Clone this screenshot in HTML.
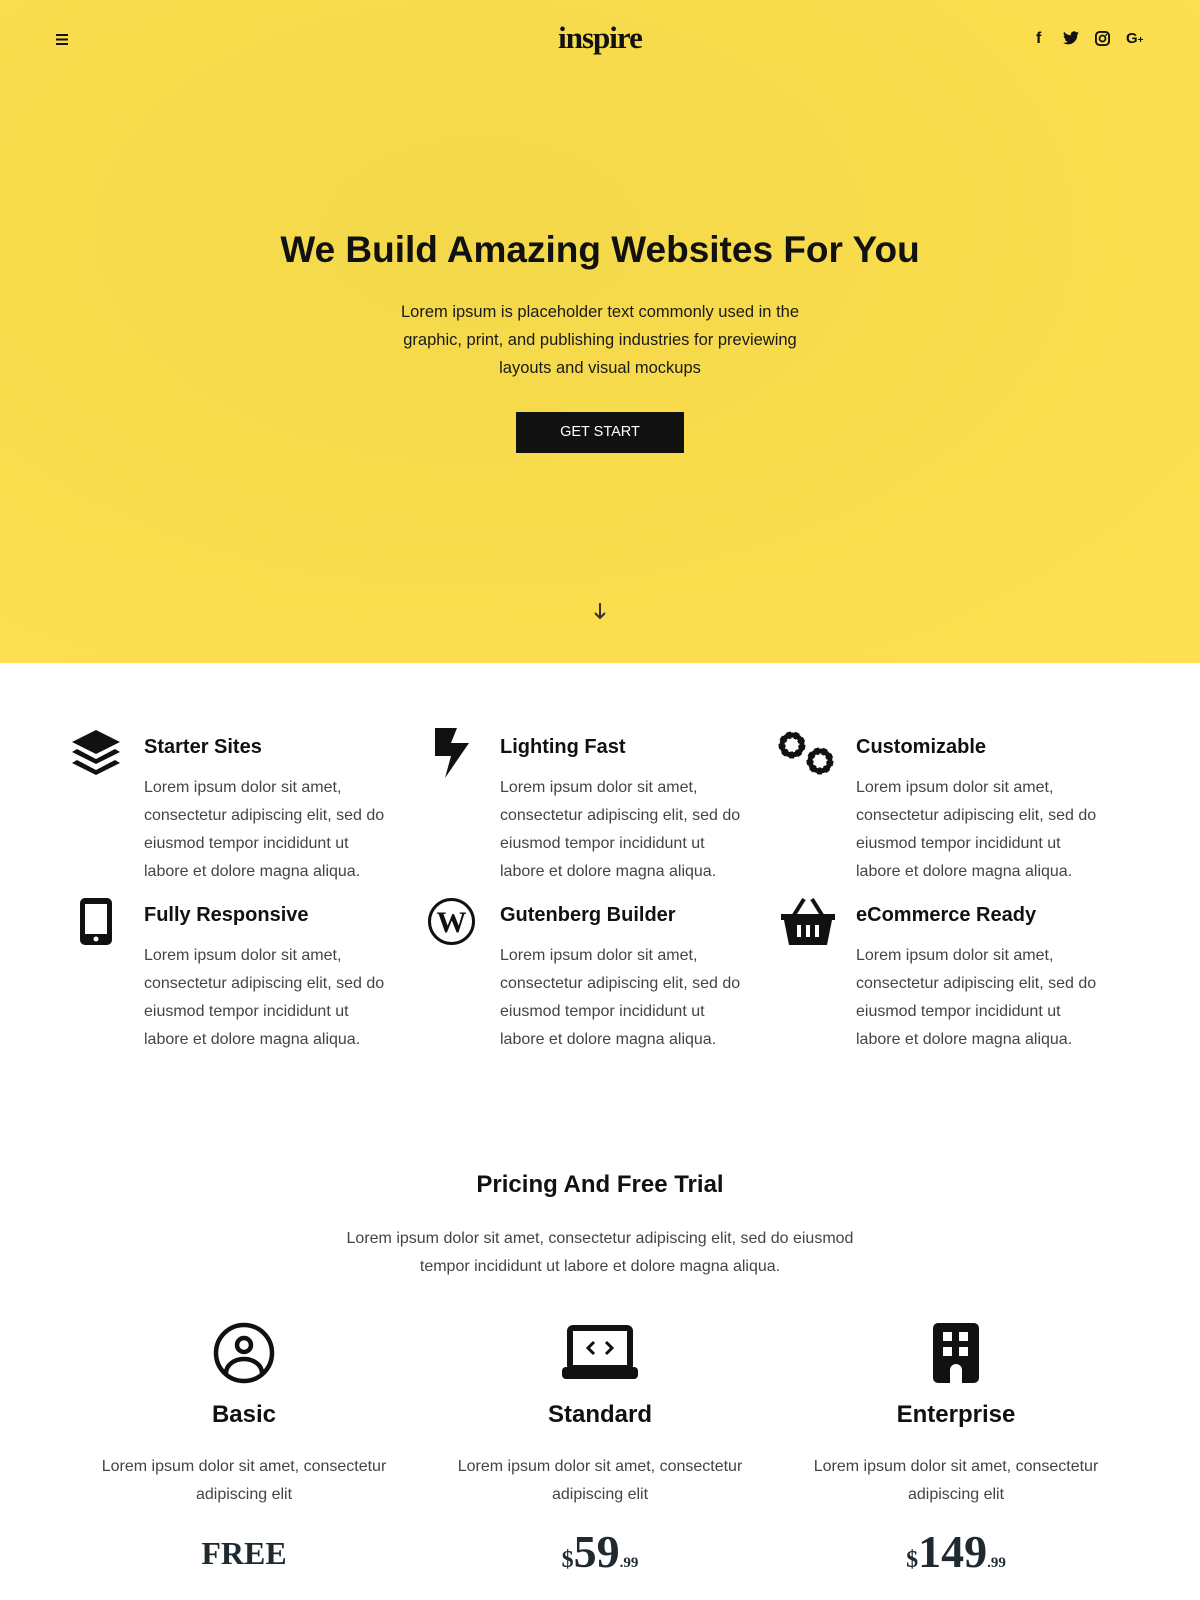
<!DOCTYPE html>
<html><head><meta charset="utf-8"><style>
*{margin:0;padding:0;box-sizing:border-box}
body{width:1200px;height:1600px;overflow:hidden;font-family:"Liberation Sans",sans-serif;background:#fff;color:#111;position:relative}
.hero{position:absolute;left:0;top:0;width:1200px;height:663px;background:radial-gradient(ellipse at 40% 35%,#f3d84a 0%,#f8dc4c 45%,#fcdf50 75%,#fde152 100%)}
.abs{position:absolute}
.logo{left:0;width:1200px;text-align:center;top:20px;font-family:"Liberation Serif",serif;font-weight:bold;font-size:31px;letter-spacing:-1px;color:#111}
h1{position:absolute;left:0;width:1200px;text-align:center;top:229px;font-size:37px;font-weight:bold;color:#111}
.hp{left:385px;width:430px;text-align:center;top:298px;font-size:16.5px;line-height:28px;color:#1a1a1a}
.btn{left:516px;top:412px;width:168px;height:41px;background:#111;color:#fff;font-size:14.5px;text-align:center;line-height:41px}
.ft{font-size:20px;font-weight:bold;color:#111}
.fp{font-size:16px;line-height:28px;color:#444;width:250px}
.pc{width:360px;text-align:center}
.pt{font-size:24px;font-weight:bold;color:#111}
.pp{font-size:16px;line-height:28px;color:#444;margin-top:24px}
.price{font-family:"Liberation Serif",serif;font-weight:bold;color:#1e2a30;margin-top:22px}
</style></head><body>
<div class="hero"></div>
<svg class="abs" style="left:56px;top:34px" width="14" height="12"><rect y="0" width="12" height="2" fill="#111"/><rect y="4.5" width="12" height="2" fill="#111"/><rect y="9" width="12" height="2" fill="#111"/></svg>
<div class="abs logo">inspire</div>
<div class="abs" style="left:1036px;top:30px;font-size:16px;font-weight:bold;color:#111">f</div>
<svg class="abs" style="left:1063px;top:31px" width="16" height="14" viewBox="0 0 24 20"><path d="M24 2.4a10 10 0 0 1-2.8.8A5 5 0 0 0 23.3.4a10 10 0 0 1-3.1 1.2A4.9 4.9 0 0 0 11.8 6 14 14 0 0 1 1.7.9a4.9 4.9 0 0 0 1.5 6.6A5 5 0 0 1 1 6.9a4.9 4.9 0 0 0 3.9 4.8 5 5 0 0 1-2.2.1 4.9 4.9 0 0 0 4.6 3.4A9.9 9.9 0 0 1 0 17.3 14 14 0 0 0 7.5 19.5c9 0 14-7.5 14-14v-.6A10 10 0 0 0 24 2.4z" fill="#111"/></svg>
<svg class="abs" style="left:1095px;top:31px" width="15" height="15" viewBox="0 0 16 16"><rect x="1" y="1" width="14" height="14" rx="4" fill="none" stroke="#111" stroke-width="2"/><circle cx="8" cy="8" r="3.2" fill="none" stroke="#111" stroke-width="1.8"/><circle cx="12" cy="4" r="1" fill="#111"/></svg>
<div class="abs" style="left:1126px;top:30px;font-size:15px;font-weight:bold;color:#111">G<span style="font-size:10px">+</span></div>
<h1>We Build Amazing Websites For You</h1>
<div class="abs hp">Lorem ipsum is placeholder text commonly used in the graphic, print, and publishing industries for previewing layouts and visual mockups</div>
<div class="abs btn">GET START</div>
<svg class="abs" style="left:594px;top:602px" width="12" height="18" viewBox="0 0 12 18"><path d="M6 1v15M1 11l5 5 5-5" stroke="#333" stroke-width="2" fill="none"/></svg>

<svg class="abs" style="left:71px;top:729px" width="50" height="49" viewBox="0 0 50 49"><path d="M25 1L49 13 25 25 1 13z" fill="#111"/><path d="M6 20l19 10 19-10 5 3-24 12L1 23z" fill="#111"/><path d="M6 31l19 10 19-10 5 3-24 12L1 34z" fill="#111"/></svg>
<svg class="abs" style="left:433px;top:728px" width="38" height="50" viewBox="0 0 38 50"><path d="M2 0h22l-6 15h18L12 50l6-22H2z" fill="#111"/></svg>
<svg class="abs" style="left:777px;top:730px" width="62" height="50" viewBox="0 0 62 50"><circle cx="15" cy="15" r="10" fill="none" stroke="#111" stroke-width="7" stroke-dasharray="4 3"/><circle cx="15" cy="15" r="10" fill="none" stroke="#111" stroke-width="5"/><circle cx="43" cy="31" r="10" fill="none" stroke="#111" stroke-width="7" stroke-dasharray="4 3"/><circle cx="43" cy="31" r="10" fill="none" stroke="#111" stroke-width="5"/></svg>
<svg class="abs" style="left:79px;top:897px" width="34" height="49" viewBox="0 0 34 49"><rect x="1" y="1" width="32" height="47" rx="5" fill="#111"/><rect x="6" y="7" width="22" height="30" fill="#fff"/><circle cx="17" cy="42" r="2.5" fill="#fff"/></svg>
<svg class="abs" style="left:427px;top:897px" width="49" height="49" viewBox="0 0 49 49"><circle cx="24.5" cy="24.5" r="22" fill="none" stroke="#111" stroke-width="3"/><text x="24.5" y="35" text-anchor="middle" font-family="Liberation Serif" font-size="30" font-weight="bold" fill="#111">W</text></svg>
<svg class="abs" style="left:780px;top:897px" width="56" height="49" viewBox="0 0 56 49"><path d="M14 18L24 2M42 18L32 2" stroke="#111" stroke-width="4"/><path d="M1 17h54v6h-3l-5 25H9L4 23H1z" fill="#111"/><rect x="17" y="28" width="4" height="12" fill="#fff"/><rect x="26" y="28" width="4" height="12" fill="#fff"/><rect x="35" y="28" width="4" height="12" fill="#fff"/></svg>

<div class="abs ft" style="left:144px;top:736px">Starter Sites</div>
<div class="abs ft" style="left:500px;top:736px">Lighting Fast</div>
<div class="abs ft" style="left:856px;top:736px">Customizable</div>
<div class="abs fp" style="left:144px;top:774px">Lorem ipsum dolor sit amet, consectetur adipiscing elit, sed do eiusmod tempor incididunt ut labore et dolore magna aliqua.</div>
<div class="abs fp" style="left:500px;top:774px">Lorem ipsum dolor sit amet, consectetur adipiscing elit, sed do eiusmod tempor incididunt ut labore et dolore magna aliqua.</div>
<div class="abs fp" style="left:856px;top:774px">Lorem ipsum dolor sit amet, consectetur adipiscing elit, sed do eiusmod tempor incididunt ut labore et dolore magna aliqua.</div>
<div class="abs ft" style="left:144px;top:904px">Fully Responsive</div>
<div class="abs ft" style="left:500px;top:904px">Gutenberg Builder</div>
<div class="abs ft" style="left:856px;top:904px">eCommerce Ready</div>
<div class="abs fp" style="left:144px;top:942px">Lorem ipsum dolor sit amet, consectetur adipiscing elit, sed do eiusmod tempor incididunt ut labore et dolore magna aliqua.</div>
<div class="abs fp" style="left:500px;top:942px">Lorem ipsum dolor sit amet, consectetur adipiscing elit, sed do eiusmod tempor incididunt ut labore et dolore magna aliqua.</div>
<div class="abs fp" style="left:856px;top:942px">Lorem ipsum dolor sit amet, consectetur adipiscing elit, sed do eiusmod tempor incididunt ut labore et dolore magna aliqua.</div>

<div class="abs" style="left:0;width:1200px;text-align:center;top:1171px;font-size:24px;font-weight:bold">Pricing And Free Trial</div>
<div class="abs" style="left:330px;width:540px;text-align:center;top:1225px;font-size:16px;line-height:28px;color:#444">Lorem ipsum dolor sit amet, consectetur adipiscing elit, sed do eiusmod tempor incididunt ut labore et dolore magna aliqua.</div>

<svg class="abs" style="left:213px;top:1322px" width="62" height="62" viewBox="0 0 62 62"><circle cx="31" cy="31" r="28" fill="none" stroke="#111" stroke-width="4.5"/><circle cx="31" cy="23" r="7" fill="none" stroke="#111" stroke-width="4.5"/><path d="M13 51a18 14 0 0 1 36 0" fill="none" stroke="#111" stroke-width="4.5"/></svg>
<svg class="abs" style="left:562px;top:1325px" width="76" height="56" viewBox="0 0 76 56"><rect x="8" y="3" width="60" height="40" rx="3" fill="none" stroke="#111" stroke-width="6"/><path d="M32 17l-6 6 6 6M44 17l6 6-6 6" stroke="#111" stroke-width="3" fill="none"/><rect x="0" y="42" width="76" height="12" rx="4" fill="#111"/></svg>
<svg class="abs" style="left:932px;top:1322px" width="48" height="62" viewBox="0 0 48 62"><rect x="1" y="1" width="46" height="60" rx="5" fill="#111"/><rect x="11" y="10" width="9" height="9" fill="#fff"/><rect x="27" y="10" width="9" height="9" fill="#fff"/><rect x="11" y="25" width="9" height="9" fill="#fff"/><rect x="27" y="25" width="9" height="9" fill="#fff"/><path d="M18 61V48a6 6 0 0 1 12 0v13z" fill="#fff"/></svg>

<div class="abs pc" style="left:64px;top:1401px"><div class="pt">Basic</div><div class="pp">Lorem ipsum dolor sit amet, consectetur adipiscing elit</div><div class="price" style="font-size:32px;margin-top:26px">FREE</div></div>
<div class="abs pc" style="left:420px;top:1401px"><div class="pt">Standard</div><div class="pp">Lorem ipsum dolor sit amet, consectetur adipiscing elit</div><div class="price" style="margin-top:16px"><span style="font-size:24px">$</span><span style="font-size:46px">59</span><span style="font-size:15px">.99</span></div></div>
<div class="abs pc" style="left:776px;top:1401px"><div class="pt">Enterprise</div><div class="pp">Lorem ipsum dolor sit amet, consectetur adipiscing elit</div><div class="price" style="margin-top:16px"><span style="font-size:24px">$</span><span style="font-size:46px">149</span><span style="font-size:15px">.99</span></div></div>
</body></html>
